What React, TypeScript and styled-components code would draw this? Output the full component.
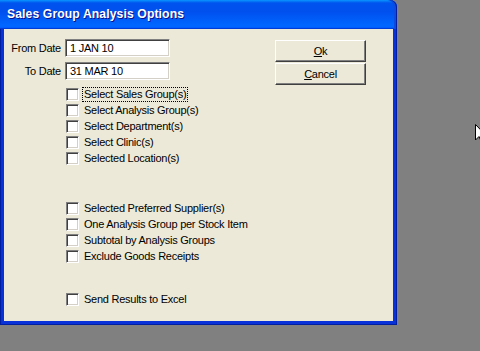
import React from 'react';
import styled, { createGlobalStyle } from 'styled-components';

const GlobalStyle = createGlobalStyle`
  html, body {
    margin: 0;
    padding: 0;
    background: #808080;
  }
  body {
    font-family: "Liberation Sans", Arial, sans-serif;
    font-size: 11px;
    letter-spacing: -0.25px;
    color: #000;
  }
`;

const Desktop = styled.div`
  position: relative;
  width: 480px;
  height: 351px;
  background: #808080;
  overflow: hidden;
`;

const Window = styled.div`
  width: 397px;
  height: 325px;
  display: flex;
  flex-direction: column;
`;

const TitleBar = styled.div`
  height: 29px;
  flex: none;
  display: flex;
  align-items: center;
  padding: 0 0 1px 7px;
  box-sizing: border-box;
  border-top-right-radius: 7px;
  background: linear-gradient(
    to bottom,
    #0997ff 0,
    #0053ee 10%,
    #0050ee 40%,
    #0066ff 86%,
    #0066ff 92%,
    #005bff 95%,
    #003dd7 97%,
    #003dd7 100%
  );
  box-shadow: inset -1px 0 #001ea0, inset -3px 0 #0c4ae0;
`;

const Title = styled.span`
  font-family: "Liberation Sans", Arial, sans-serif;
  font-weight: bold;
  font-size: 12.2px;
  color: #fff;
  text-shadow: 1px 1px #0f1089;
  letter-spacing: 0.1px;
`;

const Frame = styled.div`
  flex: 1;
  display: flex;
  background: #0831d9;
  padding: 0 4px 4px 4px;
  box-shadow: inset -1px -1px #001ea0, inset 1px 0 #001ea0;
`;

const Body = styled.div`
  flex: 1;
  background: #ece9d8;
  display: flex;
  padding: 10px 0 0 0;
`;

const FormColumn = styled.div`
  width: 271px;
  display: flex;
  flex-direction: column;
`;

const FieldRow = styled.div`
  display: flex;
  align-items: center;
  height: 18px;
  margin-bottom: 5px;
`;

const Label = styled.label`
  width: 57px;
  text-align: right;
  padding-right: 4px;
`;

const TextInput = styled.div`
  width: 105px;
  height: 18px;
  box-sizing: border-box;
  background: #fff;
  border: 1px solid;
  border-color: #808080 #ffffff #ffffff #808080;
  box-shadow: inset 1px 1px #404040, inset -1px -1px #d4d0c8;
  padding: 1px 0 0 4px;
  line-height: 14px;
`;

const CheckGroup = styled.div<{ $gap: number }>`
  display: flex;
  flex-direction: column;
  margin-top: ${(p) => p.$gap}px;
  padding-left: 62px;
`;

const CheckRow = styled.div`
  display: flex;
  align-items: center;
  height: 16px;
`;

const Box = styled.span`
  width: 13px;
  height: 13px;
  box-sizing: border-box;
  background: #fff;
  border: 1px solid;
  border-color: #808080 #ffffff #ffffff #808080;
  box-shadow: inset 1px 1px #404040, inset -1px -1px #d4d0c8;
  margin-right: 4px;
`;

const CheckText = styled.span<{ $focus?: boolean }>`
  padding: 0 1px;
  line-height: 13px;
  outline: ${(p) => (p.$focus ? '1px dotted #000' : 'none')};
`;

const ButtonColumn = styled.div`
  display: flex;
  flex-direction: column;
  gap: 1px;
  margin-top: 1px;
`;

const Button = styled.div`
  width: 91px;
  height: 22px;
  box-sizing: border-box;
  display: flex;
  align-items: center;
  justify-content: center;
  background: #ece9d8;
  border: 1px solid;
  border-color: #ffffff #404040 #404040 #ffffff;
  box-shadow: inset -1px -1px #808080;
  font-size: 11px;
`;

const Cursor = styled.svg`
  position: absolute;
  left: 475px;
  top: 124px;
`;

const checksA = [
  'Select Sales Group(s)',
  'Select Analysis Group(s)',
  'Select Department(s)',
  'Select Clinic(s)',
  'Selected Location(s)',
];

const checksB = [
  'Selected Preferred Supplier(s)',
  'One Analysis Group per Stock Item',
  'Subtotal by Analysis Groups',
  'Exclude Goods Receipts',
];

function App() {
  return (
    <>
      <GlobalStyle />
      <Desktop>
        <Window>
          <TitleBar>
            <Title>Sales Group Analysis Options</Title>
          </TitleBar>
          <Frame>
            <Body>
              <FormColumn>
                <FieldRow>
                  <Label>From Date</Label>
                  <TextInput>1 JAN 10</TextInput>
                </FieldRow>
                <FieldRow>
                  <Label>To Date</Label>
                  <TextInput>31 MAR 10</TextInput>
                </FieldRow>
                <CheckGroup $gap={1}>
                  {checksA.map((t, i) => (
                    <CheckRow key={t}>
                      <Box />
                      <CheckText $focus={i === 0}>{t}</CheckText>
                    </CheckRow>
                  ))}
                </CheckGroup>
                <CheckGroup $gap={34}>
                  {checksB.map((t) => (
                    <CheckRow key={t}>
                      <Box />
                      <CheckText>{t}</CheckText>
                    </CheckRow>
                  ))}
                </CheckGroup>
                <CheckGroup $gap={27}>
                  <CheckRow>
                    <Box />
                    <CheckText>Send Results to Excel</CheckText>
                  </CheckRow>
                </CheckGroup>
              </FormColumn>
              <ButtonColumn>
                <Button>
                  <u>O</u>k
                </Button>
                <Button>
                  <u>C</u>ancel
                </Button>
              </ButtonColumn>
            </Body>
          </Frame>
        </Window>
        <Cursor width="12" height="20" viewBox="0 0 12 20">
          <polygon points="0.5,0.5 0.5,16 4,12.5 7,19 9,18 6,11.5 11,11.5" fill="#fff" stroke="#000" strokeWidth="1" />
        </Cursor>
      </Desktop>
    </>
  );
}

export default App;
